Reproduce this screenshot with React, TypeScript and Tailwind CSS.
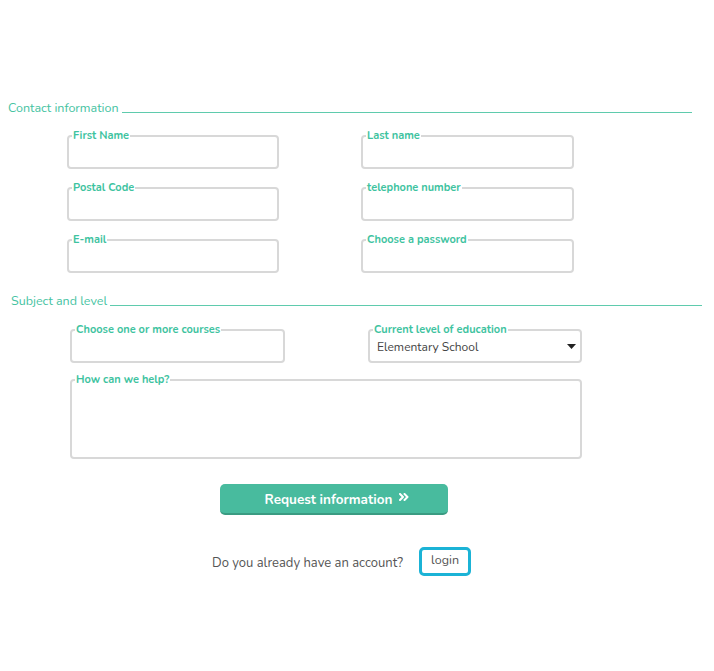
import React from 'react';

const font = { fontFamily: 'Nunito, Lato, "Open Sans", sans-serif' };

function Field({ label, height = 'h-[24px]', children }: { label: string; height?: string; children?: React.ReactNode }) {
  return (
    <fieldset className="border-2 border-[#d8d8d8] rounded-[4px] pl-[3px] pr-2 m-0 min-w-0">
      <legend className="px-[1px] text-[11px] leading-[14px] font-bold text-[#3ec39f]">{label}</legend>
      <div className={`${height} flex items-center pl-[5px]`}>{children}</div>
    </fieldset>
  );
}

function SectionTitle({ title }: { title: string }) {
  return (
    <div className="flex items-end gap-[3px]">
      <span className="text-[12.5px] leading-[16px] text-[#46c3a2] whitespace-nowrap">{title}</span>
      <div className="flex-1 border-t-[1.5px] border-[#5fcbad] mb-[3px]" />
    </div>
  );
}

export default function App() {
  return (
    <div className="w-[714px] h-[671px] bg-white" style={font}>
      <div className="pt-[100px] pl-[8px] pr-[22px]">
        <SectionTitle title="Contact information" />
      </div>

      <div className="grid grid-cols-[212px_213px] gap-x-[82px] gap-y-[12px] pl-[67px] mt-[13px]">
        <Field label="First Name" />
        <Field label="Last name" />
        <Field label="Postal Code" />
        <Field label="telephone number" />
        <Field label="E-mail" />
        <Field label="Choose a password" />
      </div>

      <div className="pl-[11px] pr-[12px] mt-[20px]">
        <SectionTitle title="Subject and level" />
      </div>

      <div className="grid grid-cols-[215px_214px] gap-x-[83px] gap-y-[10px] pl-[70px] mt-[14px]">
        <Field label="Choose one or more courses" />
        <Field label="Current level of education">
          <div className="flex-1 flex items-center justify-between -mt-[5px] -ml-[1px] -mr-[4px]">
            <span className="text-[12px] text-[#444]">Elementary School</span>
            <svg width="9" height="5" viewBox="0 0 9 5"><path d="M0 0h9L4.5 5z" fill="#222" /></svg>
          </div>
        </Field>
        <div className="col-span-2">
          <Field label="How can we help?" height="h-[70px]" />
        </div>
      </div>

      <div className="pl-[220px] mt-[25px]">
        <button className="w-[228px] h-[31px] rounded-[5px] bg-[#48bb9e] border-b-2 border-[#3a9b82] text-white text-[13.5px] font-bold flex items-center justify-center gap-[7px] pl-[6px] pt-[3px]">
          <span>Request information</span>
          <svg width="10" height="8" viewBox="0 0 10 8" className="-mt-[7px]">
            <path d="M1 1l3 3-3 3M5.5 1l3 3-3 3" fill="none" stroke="white" strokeWidth="2" strokeLinecap="round" strokeLinejoin="round" />
          </svg>
        </button>
      </div>

      <div className="flex items-center pl-[212px] mt-[32px]">
        <span className="text-[13px] text-[#555] pt-[5px]">Do you already have an account?</span>
        <button className="ml-[16px] w-[52px] h-[29px] rounded-[5px] border-[3px] border-[#1bb3d6] text-[12.5px] text-[#555] pb-[3px]">login</button>
      </div>
    </div>
  );
}
